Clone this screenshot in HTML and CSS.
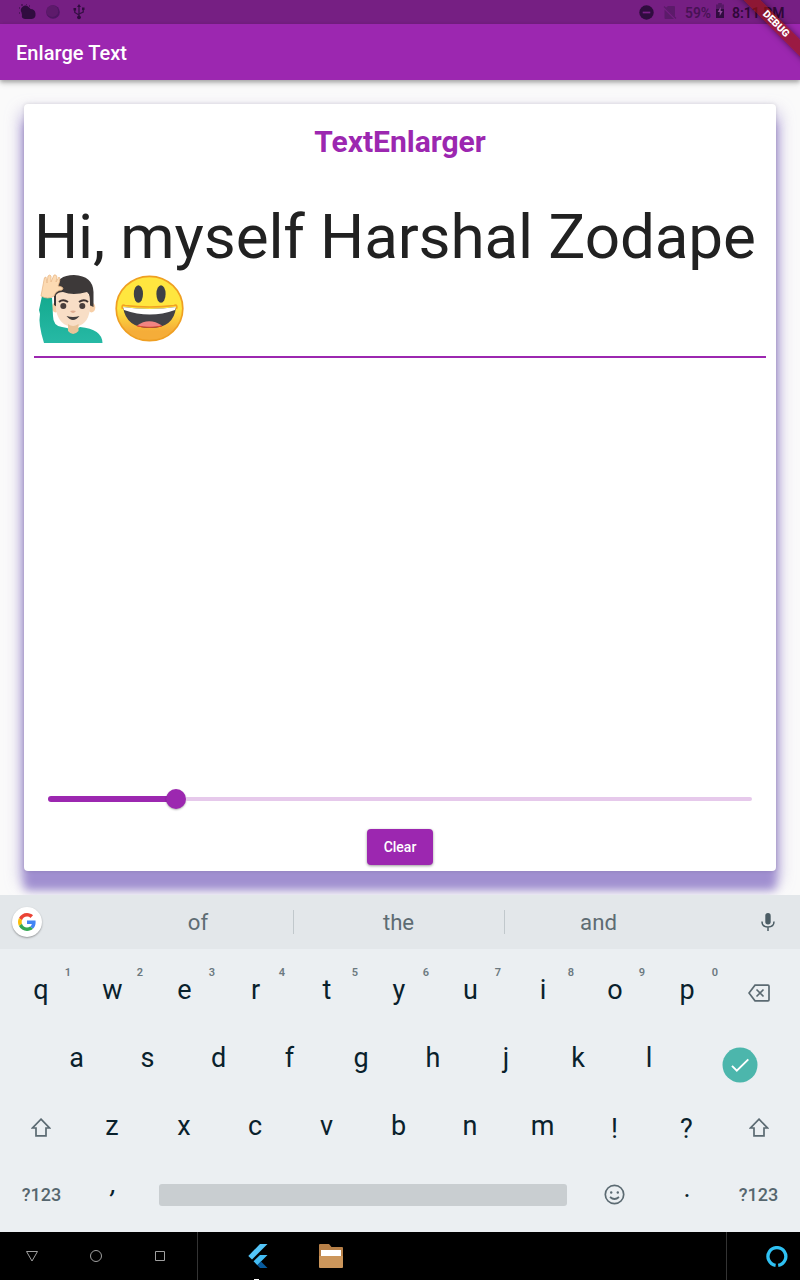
FILE: index.html
```html
<!DOCTYPE html>
<html lang="en">
<head>
<meta charset="utf-8">
<title>Enlarge Text</title>
<link rel="stylesheet" href="styles.css">
</head>
<body>
<div class="screen">
  <div class="status">
    <div class="status-left">
      <svg width="18" height="16" viewBox="0 0 18 16"><path d="M2.500 8.500A4.500 4.500 0 0 1 9.500 3Q11 4 11.500 5Q16 5 16.500 9.500Q17 14.500 12.500 15H6Q2 14.500 3 11Z"/><path d="M0 4h1M2 1h2M7 0h1M0 9h1M10 2h1" stroke="#2e0c3c" stroke-width="1.200"/></svg>
      <svg width="16" height="16" viewBox="0 0 16 16"><circle cx="8" cy="8" r="6.800" fill="#4e1662"/><circle cx="7.300" cy="7.200" r="5.900" fill="#5d1a6b"/></svg>
      <svg width="12" height="16" viewBox="0 0 12 16" class="usb"><path d="M6 2V13M1.800 6v2.500L6 11M10.200 5v3L6 10" fill="none" stroke="#351044" stroke-width="1.300"/><path d="M6 0l2 3H4ZM0.500 4h2.600v2.600H.5ZM9 3.500h2.500V6H9Z"/><circle cx="6" cy="13.300" r="1.900"/></svg>
    </div>
    <div class="status-right">
      <svg width="15" height="15" viewBox="0 0 15 15"><circle cx="7.500" cy="7.500" r="7.200"/><path d="M3.700 7.500h7.600" stroke="#7b2187" stroke-width="1.700"/></svg>
      <svg class="sim" width="14" height="15" viewBox="0 0 14 15"><path d="M5 1h6q1 0 1 1v9.500L3 2.800ZM1.500 4.500L11 14H2.500q-1 0-1-1Z" fill="#5c1b6a"/><path d="M1 1.500L13 13.500" stroke="#5c1b6a" stroke-width="1.200"/></svg>
      <span class="battery-text">59%</span>
      <svg class="battery" width="8" height="15" viewBox="0 0 8 15"><path d="M2.200 0h3.600v1.500H8V6H0V1.500h2.200Z" fill="#561965"/><path d="M0 6h8v9H0Z"/><path d="M4.700 4L1.700 9h2v4l3-5H4.700Z" fill="#8e4699"/></svg>
      <span class="clock">8:11 PM</span>
    </div>
  </div>
  <header class="appbar">Enlarge Text</header>
  <div class="debug-clip"><div class="debug">DEBUG</div></div>
  <main class="content">
    <section class="card">
      <h1 class="title">TextEnlarger</h1>
      <div class="field">
        <div class="sample">Hi, myself Harshal Zodape</div>
        <div class="emojis">
          <svg width="66" height="70" viewBox="0 0 66 70" role="img" aria-label="Man raising hand">
            <defs><linearGradient id="shirt" x2="0" y2="1"><stop stop-color="#14aa8f"/><stop offset="1" stop-color="#27b9a5"/></linearGradient></defs>
            <ellipse cx="17.500" cy="33.500" rx="3.800" ry="5" fill="#f7cfa7"/><ellipse cx="53.500" cy="33.500" rx="3.800" ry="5" fill="#f7cfa7"/>
            <path d="M16 31V16Q19 1 36 1Q55 2 55.500 18V33L51 31V20H19V33Z" fill="#3d3939"/>
            <path d="M18 21Q20 18 25 18Q35 22 49 18Q52 20 52 28V35Q50 52 35.500 53Q21 52 18 36Z" fill="#f8dec6"/>
            <path d="M1 36L4 22L14 24L15 42Q15 52 24 53L29 54Q36 58 42 53Q64 55 64.500 69H6Q0 50 2 40Z" fill="url(#shirt)"/>
            <path d="M30 50V57Q35 63 40.500 57V50Q35 54 30 50Z" fill="#e9c398"/>
            <path d="M3 22L6 6Q6 3 8 3L9 9L10 2Q12 0 13 2L13 8L16 1Q18 0 19 3L18 8L21 3Q23 5 20 12Q27 13 24 16Q18 16 16 22Q10 26 3 22Z" fill="#fcdab2" stroke="#e8b989" stroke-width=".8"/>
            <path d="M21 28Q25 24.500 30 28M41 28Q46 24.500 50 28" fill="none" stroke="#3f3433" stroke-width="2"/>
            <circle cx="25.300" cy="32" r="3" fill="#493e3c"/><circle cx="44.300" cy="32" r="3" fill="#493e3c"/>
            <path d="M32 37Q35 36 38 37Q35 41 32 37Z" fill="#dfad91"/><path d="M28.500 42Q35 44 41.500 42Q35 50 28.500 42Z" fill="#413d3d"/>
          </svg>
          <svg width="70" height="68" viewBox="0 0 70 68" role="img" aria-label="Smiling face">
            <defs><linearGradient id="face" x2="0" y2="1"><stop offset=".5" stop-color="#ffe63f"/><stop offset=".85" stop-color="#f5ad39"/></linearGradient></defs>
            <ellipse cx="34.500" cy="34.500" rx="33.300" ry="32.200" fill="url(#face)" stroke="#ef9f22" stroke-width="1.700"/>
            <ellipse cx="23.400" cy="20" rx="4.600" ry="8.700" fill="#3e4046"/><ellipse cx="46" cy="20" rx="4.600" ry="8.700" fill="#3e4046"/>
            <path d="M8 33Q35 37 61 33Q59 54 35 54Q11 54 8 33Z" fill="#424247"/>
            <path d="M8 33Q35 37 61 33L60 36Q35 45 9 36Z" fill="#fff"/>
            <path d="M22 51.500Q34 43 47 51.500Q35 55 22 51.500Z" fill="#f18482"/><path d="M22 52Q35 54.500 47 52" fill="none" stroke="#e94b29" stroke-width="1.200"/>
            <path d="M7.500 35Q6 30 10 31.500Q35 34.500 59 31.500Q63 30 61.500 35" fill="none" stroke="#f2a222" stroke-width="1.700"/>
          </svg>
        </div>
      </div>
      <div class="slider"><div class="slider-fill"></div><div class="thumb"></div><div class="slider-rest"></div></div>
      <button class="clear">Clear</button>
    </section>
  </main>
  <section class="keyboard">
    <div class="suggestions">
      <div class="google"><svg width="18" height="18" viewBox="0 0 48 48"><path fill="#EA4335" d="M24 9.500c3.540 0 6.710 1.220 9.210 3.600l6.850-6.850C35.900 2.380 30.470 0 24 0 14.620 0 6.510 5.380 2.560 13.220l7.980 6.190C12.430 13.720 17.740 9.500 24 9.500z"/><path fill="#4285F4" d="M46.980 24.550c0-1.570-.15-3.090-.38-4.550H24v9.020h12.940c-.58 2.960-2.260 5.480-4.780 7.180l7.730 6c4.510-4.180 7.090-10.360 7.090-17.650z"/><path fill="#FBBC05" d="M10.530 28.590A14.500 14.500 0 0 1 9.770 24c0-1.600.28-3.140.76-4.590l-7.980-6.190A24 24 0 0 0 0 24c0 3.880.92 7.540 2.560 10.780z"/><path fill="#34A853" d="M24 48c6.480 0 11.930-2.130 15.890-5.810l-7.730-6c-2.150 1.450-4.920 2.300-8.160 2.300-6.260 0-11.570-4.220-13.470-9.910l-7.980 6.190C6.510 42.620 14.620 48 24 48z"/></svg></div>
      <div class="word first">of</div><div class="word middle">the</div><div class="word last">and</div>
      <svg class="mic" width="14" height="18" viewBox="0 0 14 18"><rect x="4.300" y="0" width="5.400" height="11.500" rx="2.700" fill="#4c5d65"/><path d="M1 8.500Q1 14 7 14Q13 14 13 8.500M7 14v4" fill="none" stroke="#4c5d65" stroke-width="1.500"/></svg>
    </div>
    <div class="keys">
      <div class="row top">
        <span>q<sup>1</sup></span><span>w<sup>2</sup></span><span>e<sup>3</sup></span><span>r<sup>4</sup></span><span>t<sup>5</sup></span><span>y<sup>6</sup></span><span>u<sup>7</sup></span><span>i<sup>8</sup></span><span>o<sup>9</sup></span><span>p<sup>0</sup></span>
        <span class="icon back"><svg width="22" height="18" viewBox="0 0 22 18"><path d="M7 1.200H20Q21 1.200 21 2.200V15.800Q21 16.800 20 16.800H7L1 9ZM8.500 5.500l7 7M15.500 5.500l-7 7"/></svg></span>
      </div>
      <div class="row home">
        <span>a</span><span>s</span><span>d</span><span>f</span><span>g</span><span>h</span><span>j</span><span>k</span><span>l</span>
        <span class="enter"><svg width="36" height="36" viewBox="0 0 36 36"><circle cx="18" cy="18" r="17.500" fill="#4cb6ac"/><path d="M10 18.800l4.800 4.900L26.300 12.300" fill="none" stroke="#fff" stroke-width="1.900"/></svg></span>
      </div>
      <div class="row">
        <span class="icon shift"><svg width="20" height="19" viewBox="0 0 20 19"><path d="M10 1.200L18.500 10H15v7.800H5V10H1.500Z"/></svg></span>
        <span>z</span><span>x</span><span>c</span><span>v</span><span>b</span><span>n</span><span>m</span><span class="mark">!</span><span class="mark">?</span>
        <span class="icon shift"><svg width="20" height="19" viewBox="0 0 20 19"><path d="M10 1.200L18.500 10H15v7.800H5V10H1.500Z"/></svg></span>
      </div>
      <div class="row">
        <span class="mode left">?123</span><span class="comma">,</span><span class="space"></span>
        <span class="icon smile"><svg width="21" height="21" viewBox="0 0 21 21"><circle cx="10.500" cy="10.500" r="9.200"/><path d="M6 13Q10.500 17 15 13"/><circle cx="7.200" cy="8.500" r="1.200" class="solid"/><circle cx="13.800" cy="8.500" r="1.200" class="solid"/></svg></span>
        <span class="period">.</span><span class="mode">?123</span>
      </div>
    </div>
  </section>
  <nav class="navbar">
    <div class="nav-buttons">
      <svg width="14" height="14" viewBox="0 0 14 14"><path d="M1.500 2.500H12.500L7 12Z"/></svg>
      <svg width="14" height="14" viewBox="0 0 14 14"><circle cx="7" cy="7" r="5.500"/></svg>
      <svg width="14" height="14" viewBox="0 0 14 14"><path d="M2.500 2.500h9v9h-9Z"/></svg>
    </div>
    <div class="apps">
      <div class="app active"><svg width="20" height="24" viewBox="0 0 20 24"><path d="M12 0h7.500L4 15.500L.3 12Z" fill="#54c5f8"/><path d="M12 11h7.500L13 17.500l-3.700 3.700L5.500 17.300Z" fill="#43bcf4"/><path d="M9.300 21.200L13 17.500l6.500 6.500H12Z" fill="#075a9d"/></svg></div>
      <div class="app"><svg width="24" height="24" viewBox="0 0 24 24"><path d="M0 1Q0 0 1 0h9l2.500 3H23q1 0 1 1v10H0Z" fill="#b78048"/><path d="M2 6h20v7H2Z" fill="#fff"/><path d="M0 12h24v11q0 1-1 1H1q-1 0-1-1Z" fill="#cc965b"/></svg></div>
    </div>
    <div class="assistant"><svg width="22" height="22" viewBox="0 0 22 22"><path d="M9.600 19.300A8.900 8.900 0 1 1 12.200 19.300" fill="none" stroke="#2fc1f3" stroke-width="3.300"/></svg></div>
  </nav>
</div>
</body>
</html>
```
FILE: styles.css
```css
* { box-sizing: border-box; }
body { margin: 0; font-family: Roboto, "Liberation Sans", sans-serif; }
svg { display: block; flex-shrink: 0; }
.screen { position: relative; width: 800px; height: 1280px; overflow: hidden; display: flex; flex-direction: column; background: #fafafa; }
.status { height: 24px; flex-shrink: 0; background: #761f83; display: flex; justify-content: space-between; padding: 0 14px 0 19px; color: #481255; fill: #300c3f; }
.status-left, .status-right { display: flex; align-items: center; }
.status-left { gap: 8px; }
.usb { margin-left: 4px; }
.status-right { font-size: 14px; font-weight: 500; }
.sim { margin-left: 9px; }
.battery-text { margin-left: 8px; width: 26px; white-space: nowrap; line-height: 16px; padding-top: 1px; font-size: 13.8px; font-weight: 600; }
.battery { margin: 0 0 3px 5px; }
.clock { margin-left: 8px; width: 54px; color: #300839; font-size: 14px; font-weight: 600; line-height: 16px; padding-top: 1px; white-space: nowrap; }
.appbar { height: 56px; flex-shrink: 0; padding: 0 16px; line-height: 58px; background: #9c27b0; color: #fff; font-size: 20px; font-weight: 500; letter-spacing: .05px; box-shadow: 0 2px 4px rgba(0,0,0,.26), 0 4px 6px rgba(0,0,0,.12); z-index: 1; }
.debug-clip { position: absolute; z-index: 2; right: 0; top: 0; width: 80px; height: 80px; overflow: hidden; }
.debug { position: absolute; left: 6px; top: 18px; width: 100px; height: 12px; line-height: 12px; transform: rotate(45deg); background: rgba(155,20,10,.66); color: #fff; text-align: center; font-size: 10.2px; font-weight: 900; box-shadow: 0 0 6px rgba(0,0,0,.5); }
.content { height: 815px; flex-shrink: 0; padding: 24px; }
.card { height: 767px; padding: 0 10px 6px; display: flex; flex-direction: column; border-radius: 4px; background: #fff; box-shadow: 0 0 4px rgba(0,0,0,.12), 0 19px 10px 0 #a08fd0, 0 10px 15px 3px rgba(160,143,208,.65); }
.title { margin: 0; height: 77px; line-height: 76px; text-align: center; color: #9c27b0; font-size: 30px; font-weight: 700; }
.field { height: 177px; padding-top: 19px; border-bottom: 2px solid #9c27b0; }
.sample { height: 73px; line-height: 73px; font-size: 62px; letter-spacing: -.13px; color: #212121; white-space: nowrap; }
.emojis { display: flex; gap: 11px; padding: 1px 0 0 4px; }
.slider { display: flex; align-items: center; height: 20px; margin: 431px 14px 20px; }
.slider-fill { width: 119px; height: 6px; margin-right: -1px; border-radius: 3px 0 0 3px; background: #9c27b0; }
.thumb { width: 20px; height: 20px; border-radius: 50%; background: #9c27b0; box-shadow: 0 1px 2px rgba(0,0,0,.3); }
.slider-rest { flex: 1; height: 4px; border-radius: 0 2px 2px 0; background: #e6c9eb; }
.clear { align-self: center; width: 65.4px; height: 36px; padding: 0; border: 0; border-radius: 4px; color: #fff; background: #9c27b0; font: 500 14px/36px Roboto, sans-serif; box-shadow: 0 1px 3px rgba(0,0,0,.4); }
.keyboard { position: relative; z-index: 1; height: 337px; flex-shrink: 0; background: #ebeff2; }
.suggestions { height: 54px; display: flex; align-items: center; padding-left: 12px; background: #e3e7ea; }
.google { width: 30px; height: 30px; display: grid; place-items: center; border-radius: 50%; background: #fff; box-shadow: 0 1px 2px rgba(0,0,0,.35); }
.word { text-align: center; color: #5e6c73; font-size: 22.2px; line-height: 24px; }
.first { margin-left: 61px; width: 190px; }
.middle { width: 212px; padding-right: 1px; border: solid #c1c8cc; border-width: 0 1px; }
.last { width: 187px; }
.mic { margin-left: 68.5px; }
.keys { padding: 7px 6px 0 5px; }
.row { display: grid; grid-template-columns: 71px 72px 72px 70px 73px 71px 72px 73px 71px 73px 1fr; height: 68px; font-size: 27px; line-height: 68px; color: #09212c; }
.row > span { position: relative; text-align: center; }
.row sup { position: absolute; right: 5px; top: 10px; line-height: 13px; font-size: 11px; font-weight: 600; color: #6b7980; }
.top > span:not(.icon) { padding-left: 1px; }
.home { padding-left: 36px; grid-template-columns: 71px 71px 71px 71px 72px 72px 74px 70px 72px 1fr; }
.icon, .enter { display: flex; align-items: center; justify-content: center; }
.icon svg { fill: none; stroke: #5b6a72; stroke-width: 1.7px; }
.back { padding-top: 6px; }
.row .enter { padding: 14px 0 0; }
.mark { padding-top: 3px; }
.row .mode { font-size: 18px; font-weight: 500; color: #56666e; white-space: nowrap; padding-top: 1px; }
.row .left { padding-left: 2px; }
.row .comma { padding-left: 3px; line-height: 50px; font-size: 24px; font-weight: 500; font-style: italic; }
.row .period { line-height: 56px; padding-left: 1px; }
.space { grid-column: span 6; align-self: center; width: 408px; height: 22px; margin-left: 11px; border-radius: 3px; background: #c9ced1; }
.icon .solid { fill: #5b6a72; stroke: none; }
.navbar { height: 48px; display: flex; flex-shrink: 0; background: #000; }
.nav-buttons { width: 198px; display: flex; align-items: center; gap: 50px; padding-left: 25px; border-right: 1px solid #333; }
.nav-buttons svg { fill: none; stroke: #a0a0a0; stroke-width: 1px; }
.apps { width: 528px; display: flex; gap: 49px; padding-left: 50px; }
.app { height: 48px; padding-top: 12px; }
.active { width: 22px; display: flex; flex-direction: column; }
.active::after { content: ""; width: 5px; height: 1px; margin: 11px 0 0 6px; background: #fff; }
.assistant { flex: 1; border-left: 1px solid #333; padding: 14px 0 0 39px; }
```
